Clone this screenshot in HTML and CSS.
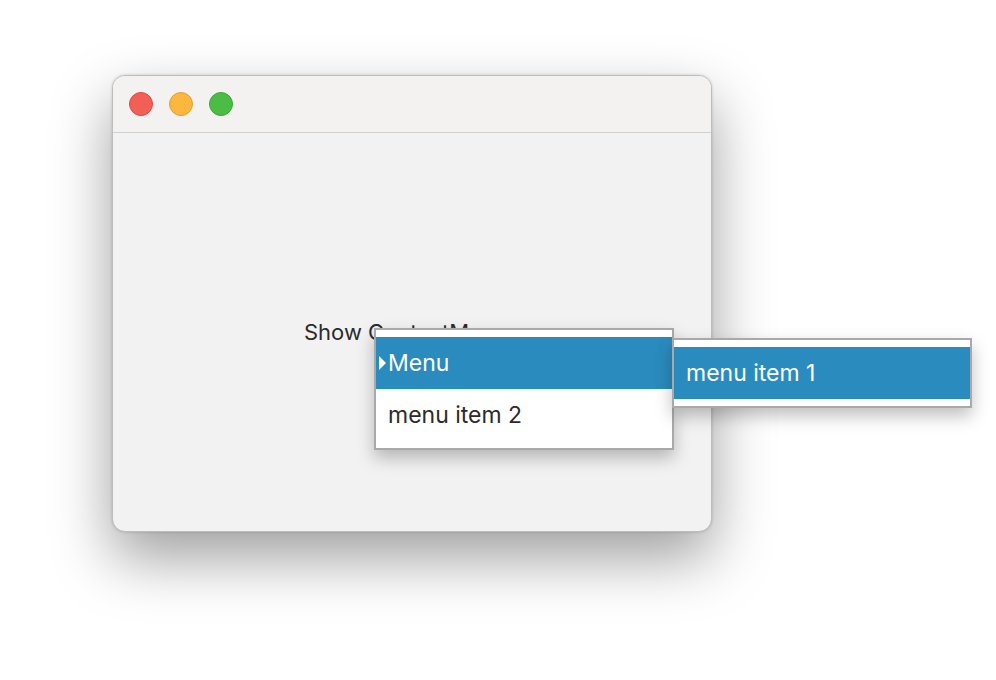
FILE: index.html
```html
<!DOCTYPE html>
<html>
<head>
<meta charset="utf-8">
<link rel="stylesheet" href="styles.css">
</head>
<body>
<div class="desktop">
  <div class="window">
    <div class="titlebar">
      <span class="light red"></span>
      <span class="light yellow"></span>
      <span class="light green"></span>
    </div>
    <div class="content">
      <span class="label">Show ContextMenu</span>
    </div>
  </div>
  <div class="menu main-menu">
    <div class="item selected"><span class="arrow"></span>Menu</div>
    <div class="item">menu item 2</div>
  </div>
  <div class="menu sub-menu">
    <div class="item selected">menu item 1</div>
  </div>
</div>
</body>
</html>
```
FILE: styles.css
```css
html, body {
  margin: 0;
  padding: 0;
  background: #ffffff;
  font-family: Inter, "Open Sans", sans-serif;
}
.desktop {
  position: relative;
  width: 996px;
  height: 680px;
  overflow: hidden;
}
.window {
  position: absolute;
  left: 112px;
  top: 75px;
  width: 600px;
  height: 457px;
  box-sizing: border-box;
  border: 1px solid #bdbdbd;
  border-radius: 13px;
  background: #f2f2f2;
  box-shadow: 0 26px 60px rgba(0,0,0,0.38), 0 0 3px rgba(0,0,0,0.18);
  display: flex;
  flex-direction: column;
  overflow: hidden;
}
.titlebar {
  height: 56px;
  flex: none;
  background: #f3f2f1;
  border-bottom: 1px solid #d0d0d0;
  display: flex;
  align-items: center;
  gap: 16px;
  padding-left: 16px;
}
.light {
  width: 24px;
  height: 24px;
  border-radius: 50%;
  box-sizing: border-box;
}
.red { background: #f25f57; border: 1px solid #df4a43; }
.yellow { background: #fbb73e; border: 1px solid #e0a12f; }
.green { background: #4bbd44; border: 1px solid #3ca736; }
.content {
  flex: 1;
  position: relative;
}
.label {
  position: absolute;
  left: 191px;
  top: 186px;
  font-size: 22px;
  color: #2b2b2b;
}
.menu {
  position: absolute;
  background: #ffffff;
  border: 2px solid #a9a9a9;
  box-sizing: border-box;
  box-shadow: 0 8px 16px rgba(0,0,0,0.25);
  padding: 7px 0;
}
.main-menu {
  left: 374px;
  top: 328px;
  width: 300px;
  height: 122px;
}
.sub-menu {
  left: 672px;
  top: 338px;
  width: 300px;
  height: 70px;
}
.item {
  height: 52px;
  display: flex;
  align-items: center;
  padding-left: 12px;
  font-size: 23px;
  color: #2b2b2b;
  position: relative;
}
.item.selected {
  background: #2a8bbe;
  color: #ffffff;
}
.arrow {
  position: absolute;
  left: 3px;
  top: 19px;
  width: 0;
  height: 0;
  border-top: 7px solid transparent;
  border-bottom: 7px solid transparent;
  border-left: 7px solid #ffffff;
}
```
